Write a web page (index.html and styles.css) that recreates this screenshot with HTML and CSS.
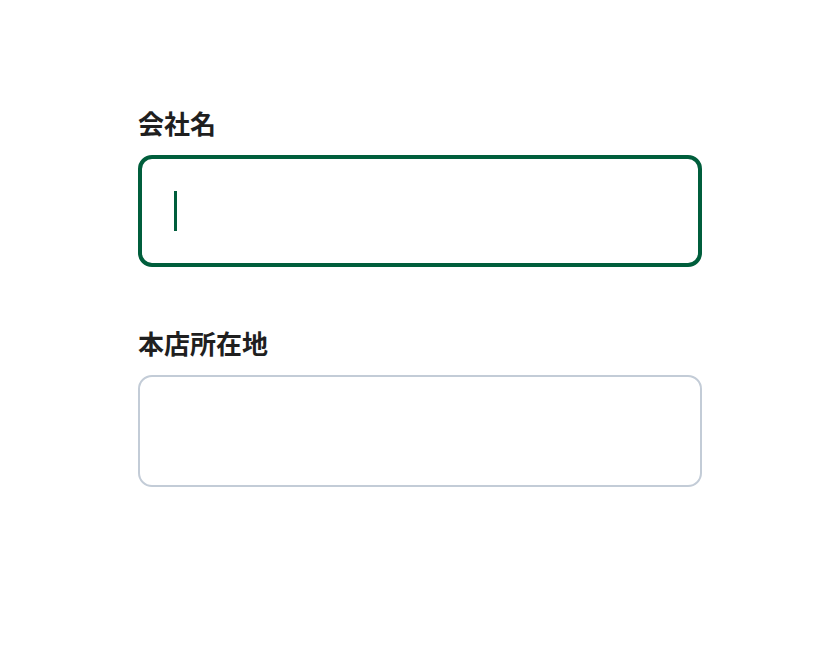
FILE: index.html
```html
<!DOCTYPE html>
<html lang="ja">
<head>
<meta charset="utf-8">
<title>Form</title>
<link rel="stylesheet" href="styles.css">
</head>
<body>
<main class="form">
  <div class="field">
    <label class="label">会社名</label>
    <div class="input focused"><span class="caret"></span></div>
  </div>
  <div class="field">
    <label class="label">本店所在地</label>
    <div class="input"></div>
  </div>
</main>
</body>
</html>
```

FILE: styles.css
```css
html, body {
  margin: 0;
  padding: 0;
  background: #ffffff;
}
body {
  font-family: "Noto Sans CJK JP", "Noto Sans", sans-serif;
  color: #1f1f1f;
}
.form {
  width: 564px;
  margin: 0 auto;
  padding-top: 107px;
  display: flex;
  flex-direction: column;
  gap: 60px;
}
.field {
  display: flex;
  flex-direction: column;
  gap: 16px;
}
.label {
  font-size: 26px;
  line-height: 32px;
  font-weight: 700;
  height: 32px;
}
.input {
  box-sizing: border-box;
  height: 112px;
  border: 2px solid #c3ccd7;
  border-radius: 14px;
  display: flex;
  align-items: center;
  padding-left: 34px;
}
.input.focused {
  border: 4px solid #005e3c;
  padding-left: 32px;
}
.caret {
  display: block;
  width: 3px;
  height: 40px;
  background: #005e3c;
}
```
